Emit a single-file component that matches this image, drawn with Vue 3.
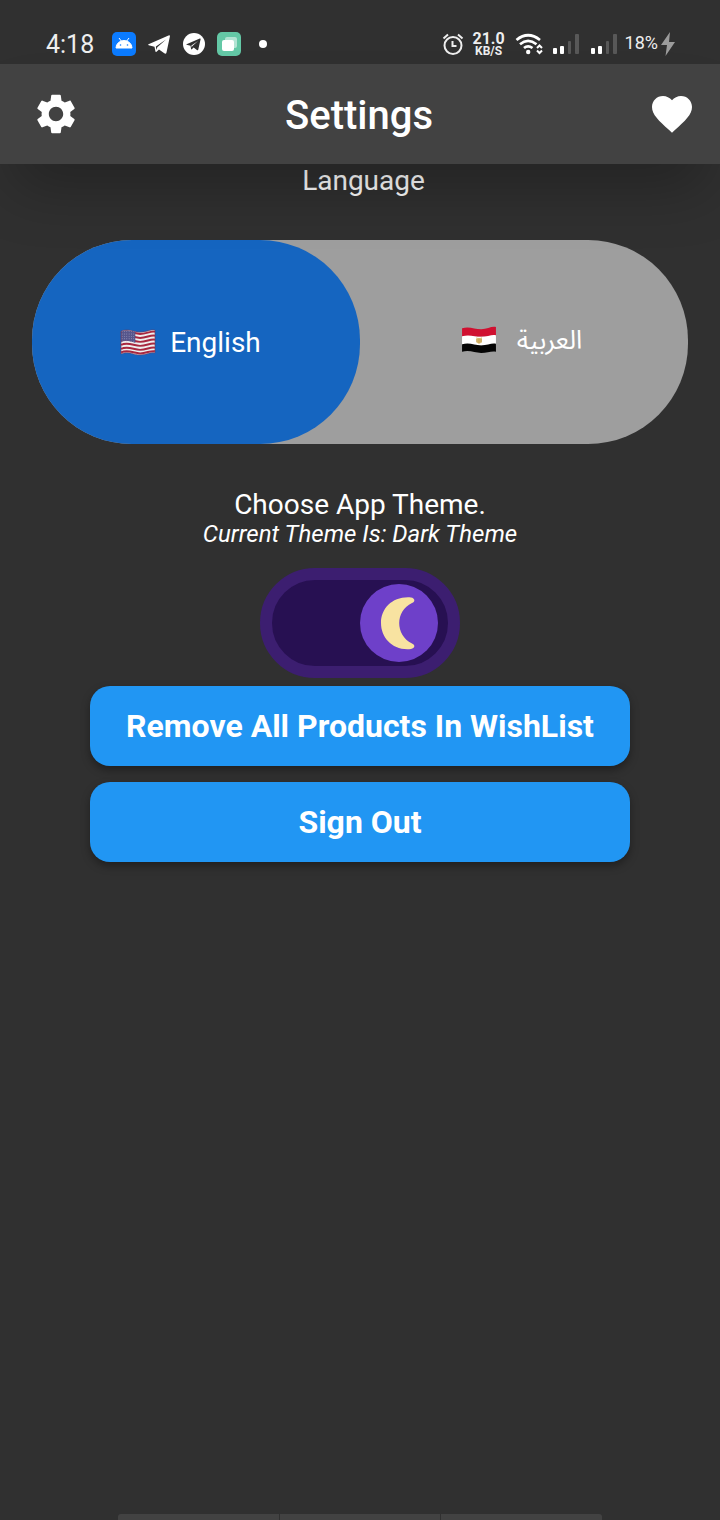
<script setup>
import { ref } from 'vue'

const language = ref('en')
const dark = ref(true)

const stars = []
for (let r = 0; r < 5; r++) {
  for (let c = 0; c < 6; c++) stars.push({ x: 2 + c * 2.2, y: 3.4 + r * 2.2 })
}
const wave = (y) => `M1 ${y}C8 ${y - 3} 13 ${y + 1} 19 ${y + 1}S29 ${y - 2} 33 ${y - 1}`
const redStripes = [4.5, 8.2, 11.9, 15.6, 19.3, 22.6]
</script>

<template>
  <div class="screen">
    <div class="status">
      <span class="clock">4:18</span>
      <div class="notices">
        <svg width="24" height="24" viewBox="0 0 24 24">
          <rect width="24" height="24" rx="5" fill="#0b7bff" />
          <path d="M4 16a8 7.5 0 0 1 16 0zM7 6l3 4M17 6l-3 4" fill="#fff" stroke="#fff" stroke-width="1" />
          <circle cx="8.5" cy="13" r="0.8" fill="#0b7bff" /><circle cx="15.5" cy="13" r="0.8" fill="#0b7bff" />
        </svg>
        <svg width="24" height="24" viewBox="0 0 24 24" fill="#fff">
          <path d="M1.5 12.2 21.5 3.4Q23.2 2.8 22.9 4.600L19.500 20.500Q19 22.500 17.300 21.300L12 17.400 9.500 19.800Q8.600 20.600 8.400 19.300L7.500 14.700 1.700 13.200Q.6 12.700 1.500 12.200ZM8.900 14.400 9.300 18 10.300 15.300 19 7.400Z" />
        </svg>
        <svg width="24" height="24" viewBox="0 0 24 24">
          <circle cx="12" cy="12" r="11" fill="#fff" />
          <path d="M4.500 12.200 17.800 6.500Q18.800 6.200 18.600 7.200L16.300 17.500Q16 18.700 14.900 18L11.600 15.600 9.800 17.300Q9.200 17.600 9.100 16.900L8.500 13.800 4.600 12.800Q4 12.500 4.500 12.200ZM9.400 13.600 9.700 15.500 10.400 14 16 8.900Z" fill="#303030" />
        </svg>
        <svg width="24" height="24" viewBox="0 0 24 24">
          <rect width="24" height="24" rx="5" fill="#64c8a6" />
          <rect x="8" y="5" width="12" height="11" rx="2" fill="#b3e4d4" />
          <rect x="5" y="8" width="12" height="11" rx="2" fill="#fff" />
        </svg>
        <span class="dot"></span>
      </div>
      <div class="system">
        <svg width="22" height="24" viewBox="0 0 22 24" fill="none" stroke="#eee" stroke-width="2">
          <circle cx="11" cy="13.500" r="8.500" /><path d="M10.500 9v5h4M1.500 6.500 6 2.500M20.500 6.500 16 2.500" />
        </svg>
        <div class="speed"><b>21.0</b><b class="unit">KB/S</b></div>
        <svg width="30" height="24" viewBox="0 0 30 24" fill="none" stroke="#fff" stroke-width="2.700">
          <path d="M1.500 8Q13 -1.500 25 8M5 12.200Q13 5.700 21.500 12.200M9 16Q13 12.700 17.500 16" />
          <circle cx="13.200" cy="20" r="2.200" fill="#fff" stroke="none" />
          <path d="M22 16 24.500 13.500 27 16M22 18.500 24.500 21 27 18.500" stroke-width="2" />
        </svg>
        <svg v-for="n in 2" :key="n" class="signal" width="28" height="24" viewBox="0 0 28 24" fill="#fff">
          <rect x="1" y="16" width="4" height="6" rx="1" /><rect x="8" y="14" width="4" height="8" rx="1" />
          <g fill="#585858"><rect x="16" y="9" width="3" height="13" rx="1" /><rect x="23" y="2" width="4" height="20" rx="1" /></g>
        </svg>
        <span class="battery">18%</span>
        <svg class="bolt" width="14" height="24" viewBox="0 0 14 24" fill="#9c9c9c"><path d="M9 0 0 13H6L4.500 24 14 10H8Z" /></svg>
      </div>
    </div>

    <header class="bar">
      <button class="icon gear" aria-label="Settings">
        <svg width="48" height="48" viewBox="0 0 24 24" fill="#fff"><path d="M19.140 12.940c.04-.3.06-.61.06-.94 0-.32-.02-.64-.07-.94l2.030-1.580c.18-.14.23-.41.12-.61l-1.920-3.320c-.12-.22-.37-.29-.59-.22l-2.390.96c-.5-.38-1.030-.7-1.620-.94L14.400 2.810c-.04-.24-.24-.41-.48-.41h-3.840c-.24 0-.43.17-.47.41L9.250 5.350C8.660 5.590 8.120 5.920 7.630 6.290L5.240 5.330c-.22-.08-.47 0-.59.22L2.740 8.870c-.12.21-.08.47.12.61l2.030 1.580c-.05.3-.09.63-.09.94s.02.64.07.94l-2.030 1.580c-.18.14-.23.41-.12.61l1.920 3.320c.12.22.37.29.59.22l2.390-.96c.5.38 1.030.7 1.620.94l.36 2.540c.05.24.24.41.48.41h3.840c.24 0 .44-.17.47-.41l.36-2.540c.59-.24 1.130-.56 1.620-.94l2.390.96c.22.08.47 0 .59-.22l1.920-3.320c.12-.22.07-.47-.12-.61l-2.010-1.580zM12 15.600c-1.980 0-3.600-1.620-3.600-3.600s1.620-3.600 3.600-3.600 3.600 1.620 3.600 3.600-1.620 3.600-3.600 3.600z" /></svg>
      </button>
      <h1>Settings</h1>
      <button class="icon heart" aria-label="Wish list">
        <svg width="48" height="48" viewBox="0 0 24 24" fill="#fff"><path d="M12 21.350l-1.450-1.320C5.400 15.360 2 12.280 2 8.500 2 5.420 4.420 3 7.500 3c1.740 0 3.410.81 4.500 2.090C13.090 3.810 14.760 3 16.500 3 19.580 3 22 5.420 22 8.500c0 3.780-3.400 6.860-8.550 11.540L12 21.350z" /></svg>
      </button>
    </header>

    <main>
      <h2 class="title indented">Language</h2>
      <div class="languages" role="radiogroup" aria-label="Language">
        <label class="option" :class="{ chosen: language === 'en' }">
          <input v-model="language" class="hidden" type="radio" name="language" value="en" />
          <svg width="36" height="28" viewBox="0 0 34 26" preserveAspectRatio="none">
            <path d="M1 3C8 0 13 4 19 4S29 1 33 2V23C29 22 25 25 19 25S8 21 1 24Z" fill="#eee" />
            <path v-for="y in redStripes" :key="y" :d="wave(y)" fill="none" stroke="#a82840" stroke-width="1.800" />
            <path d="M1 3C6 1 10 2.500 14.500 3.500V14C9 12 6 11 1 13Z" fill="#56568c" />
            <circle v-for="(s, i) in stars" :key="i" :cx="s.x" :cy="s.y" r="0.400" fill="#bbbbd5" />
            <path d="M1 3C8 0 13 4 19 4S29 1 33 2V23C29 22 25 25 19 25S8 21 1 24Z" fill="none" stroke="#7b3048" stroke-width="0.500" />
          </svg>
          <span>English</span>
        </label>
        <label class="option arabic" :class="{ chosen: language === 'ar' }">
          <input v-model="language" class="hidden" type="radio" name="language" value="ar" />
          <svg width="36" height="28" viewBox="0 0 34 26" preserveAspectRatio="none">
            <path d="M1 2C8 0 13 3 19 3S29 0 33 1V10H1Z" fill="#d01030" />
            <path d="M1 9.500C8 7.500 13 10 19 10S29 7.500 33 8.500V18H1Z" fill="#fff" />
            <path d="M1 17C8 15 13 18 19 18S29 15.500 33 16.500V24C29 23 25 25 19 25S8 22 1 24Z" fill="#050505" />
            <path d="M14.500 10.500 17 11.500 19.800 10.500 19.500 15.500 17 16.500 14.800 15.500Z" fill="#dfc27b" />
            <path d="M17 11V16M15 12V15M19 12V15" stroke="#b48a32" stroke-width="0.700" />
          </svg>
          <span lang="ar" dir="rtl">العربية</span>
        </label>
      </div>

      <h2 class="title">Choose App Theme.</h2>
      <p class="current">Current Theme Is: Dark Theme</p>
      <label class="theme" :class="{ light: !dark }">
        <input v-model="dark" class="hidden" type="checkbox" role="switch" aria-label="Dark theme" />
        <span class="thumb">
          <svg width="78" height="78" viewBox="0 0 78 78"><path d="M51 13.500C55 14 55.500 18 52 19C35 27 35 51 52 59.500C55.500 61 55 64 51 65C33 67 21 54 21 39S33 12 51 13.500Z" fill="#f8e3a1" /></svg>
        </span>
      </label>
      <button class="action">Remove All Products In WishList</button>
      <button class="action">Sign Out</button>
    </main>
    <div class="nav"><i></i><i></i><i></i></div>
  </div>
</template>

<style>
body {
  background: #303030;
}
</style>

<style scoped>
.screen {
  min-height: 100vh;
  display: flex;
  flex-direction: column;
  background: #303030;
  color: #fff;
  font-family: Roboto, "Liberation Sans", sans-serif;
  overflow: hidden;
}
.status {
  height: 40px;
  padding: 24px 45px 0 46px;
  display: flex;
  align-items: center;
  color: #eee;
}
.clock {
  width: 66px;
  font-size: 25px;
}
.notices {
  display: flex;
  align-items: center;
  gap: 11px;
}
.dot {
  width: 8px;
  height: 8px;
  margin-left: 7px;
  border-radius: 50%;
  background: #fff;
}
.system {
  display: flex;
  align-items: center;
  margin-left: auto;
}
.speed {
  width: 36px;
  margin: 0 8px 0 7px;
  display: flex;
  flex-direction: column;
  align-items: center;
  font-size: 16px;
  line-height: 13px;
}
.unit {
  font-size: 12px;
  line-height: 12px;
}
.signal {
  margin-left: 7px;
  margin-right: 3px;
}
.battery {
  margin-left: 4px;
  padding-bottom: 2px;
  font-size: 18px;
  line-height: 20px;
}
.bolt {
  margin-left: 3px;
}
.bar {
  position: relative;
  z-index: 1;
  height: 100px;
  padding: 0 16px;
  box-sizing: border-box;
  display: grid;
  grid-template-columns: 1fr auto 1fr;
  align-items: center;
  background: #424242;
}
.bar::after {
  content: "";
  position: absolute;
  inset: 0;
  pointer-events: none;
  box-shadow: 0 36px 60px -14px rgba(0, 0, 0, 0.28);
}
h1 {
  margin: 0;
  padding: 2px 2px 0 0;
  font-size: 40px;
  font-weight: 500;
}
.icon {
  width: 64px;
  padding: 0 8px;
  border: 0;
  background: none;
}
.gear {
  margin-left: 8px;
}
.heart {
  justify-self: end;
}
.icon svg {
  display: block;
}
main {
  flex: 1;
  display: flex;
  flex-direction: column;
  align-items: center;
}
.title {
  margin: 0;
  font-size: 28px;
  font-weight: 400;
  line-height: 34px;
}
.indented {
  padding-left: 7px;
}
.languages {
  align-self: stretch;
  height: 204px;
  margin: 42px 32px 44px;
  display: grid;
  grid-template-columns: 1fr 1fr;
  border-radius: 100px;
  background: #9e9e9e;
}
.option {
  display: flex;
  align-items: center;
  justify-content: center;
  gap: 14px;
  box-sizing: border-box;
  padding-right: 11px;
  border-radius: 100px;
  font-size: 28px;
}
.chosen {
  background: #1565c0;
}
.arabic {
  gap: 20px;
  padding-right: 5px;
  padding-bottom: 4px;
  font-size: 26px;
  font-family: "Noto Sans Arabic", "Noto Sans", "DejaVu Sans", sans-serif;
}
.hidden {
  position: absolute;
  opacity: 0;
}
.current {
  margin: 0;
  font-size: 24px;
  font-style: italic;
  line-height: 24px;
}
.theme {
  width: 200px;
  height: 110px;
  margin: 22px 0 8px;
  box-sizing: border-box;
  padding: 0 10px;
  display: flex;
  align-items: center;
  justify-content: flex-end;
  border: 12px solid #3c1e70;
  border-radius: 55px;
  background: #271052;
}
.theme.light {
  justify-content: flex-start;
}
.thumb {
  width: 78px;
  height: 78px;
  border-radius: 50%;
  background: #6e40c9;
}
.action {
  width: 75%;
  height: 80px;
  margin: 0 0 16px;
  border: 0;
  border-radius: 20px;
  background: #2196f3;
  box-shadow: 0 4px 8px rgba(0, 0, 0, 0.35);
  color: #fff;
  font-family: inherit;
  font-size: 32px;
  font-weight: 700;
}
.nav {
  height: 6px;
  margin: 0 118px;
  display: flex;
  gap: 1px;
  border-radius: 3px 3px 0 0;
  overflow: hidden;
}
.nav i {
  flex: 1;
  background: #424242;
}
</style>
